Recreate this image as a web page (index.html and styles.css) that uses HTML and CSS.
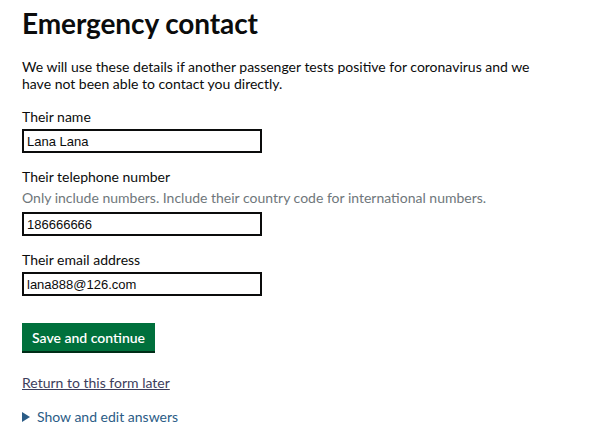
FILE: index.html
```html
<!DOCTYPE html>
<html lang="en">
<head>
<meta charset="utf-8">
<title>Emergency contact</title>
<link rel="stylesheet" href="styles.css">
</head>
<body>
<main class="page">
  <h1 class="title">Emergency contact</h1>
  <p class="lead">We will use these details if another passenger tests positive for coronavirus and we have not been able to contact you directly.</p>
  <div class="field">
    <label class="label" for="name">Their name</label>
    <input class="input" id="name" type="text" value="Lana Lana">
  </div>
  <div class="field">
    <label class="label" for="tel">Their telephone number</label>
    <div class="hint">Only include numbers. Include their country code for international numbers.</div>
    <input class="input" id="tel" type="text" value="186666666">
  </div>
  <div class="field">
    <label class="label" for="email">Their email address</label>
    <input class="input" id="email" type="text" value="lana888@126.com">
  </div>
  <button class="button" type="button">Save and continue</button>
  <p class="return"><a href="#" class="link">Return to this form later</a></p>
  <div class="details"><span class="arrow"></span><span class="summary">Show and edit answers</span></div>
</main>
</body>
</html>
```
FILE: styles.css
```css
html, body { margin: 0; padding: 0; background: #fff; }
body { font-family: Lato, "Noto Sans", sans-serif; color: #0b0c0c; }
.page { padding: 6px 0 0 22px; width: 520px; }
.title { font-size: 28px; font-weight: 700; margin: 0 0 18px; line-height: 34px; letter-spacing: -0.1px; }
.lead { font-size: 14px; line-height: 17px; margin: 0 0 16px; color: #0b0c0c; }
.field { margin-bottom: 15px; }
.label { display: block; font-size: 14px; line-height: 17px; margin-bottom: 4px; }
.hint { font-size: 14px; line-height: 17px; color: #6f777b; margin: 4px 0 6px; width: 580px; }
.input { display: block; box-sizing: border-box; width: 240px; height: 24px; border: 2px solid #0b0c0c; margin: 0; padding: 0 3px; font-family: "Liberation Sans", Arial, sans-serif; font-size: 13px; color: #0b0c0c; background: #fff; outline: none; }
.button { display: block; margin-top: 27px; background: #00703c; color: #fff; border: 0; box-shadow: 0 2px 0 #002d18; height: 28px; padding: 0 10px; font-family: Lato, "Noto Sans", sans-serif; font-size: 14px; font-weight: 600; cursor: pointer; }
.return { margin: 23px 0 0; font-size: 14px; line-height: 17px; }
.link { color: #3d3d5c; text-decoration: underline; }
.details { margin-top: 17px; display: flex; align-items: center; font-size: 14px; line-height: 17px; color: #2b5c86; }
.arrow { width: 0; height: 0; border-left: 8px solid #2b5c86; border-top: 5px solid transparent; border-bottom: 5px solid transparent; margin-right: 7px; }
```
